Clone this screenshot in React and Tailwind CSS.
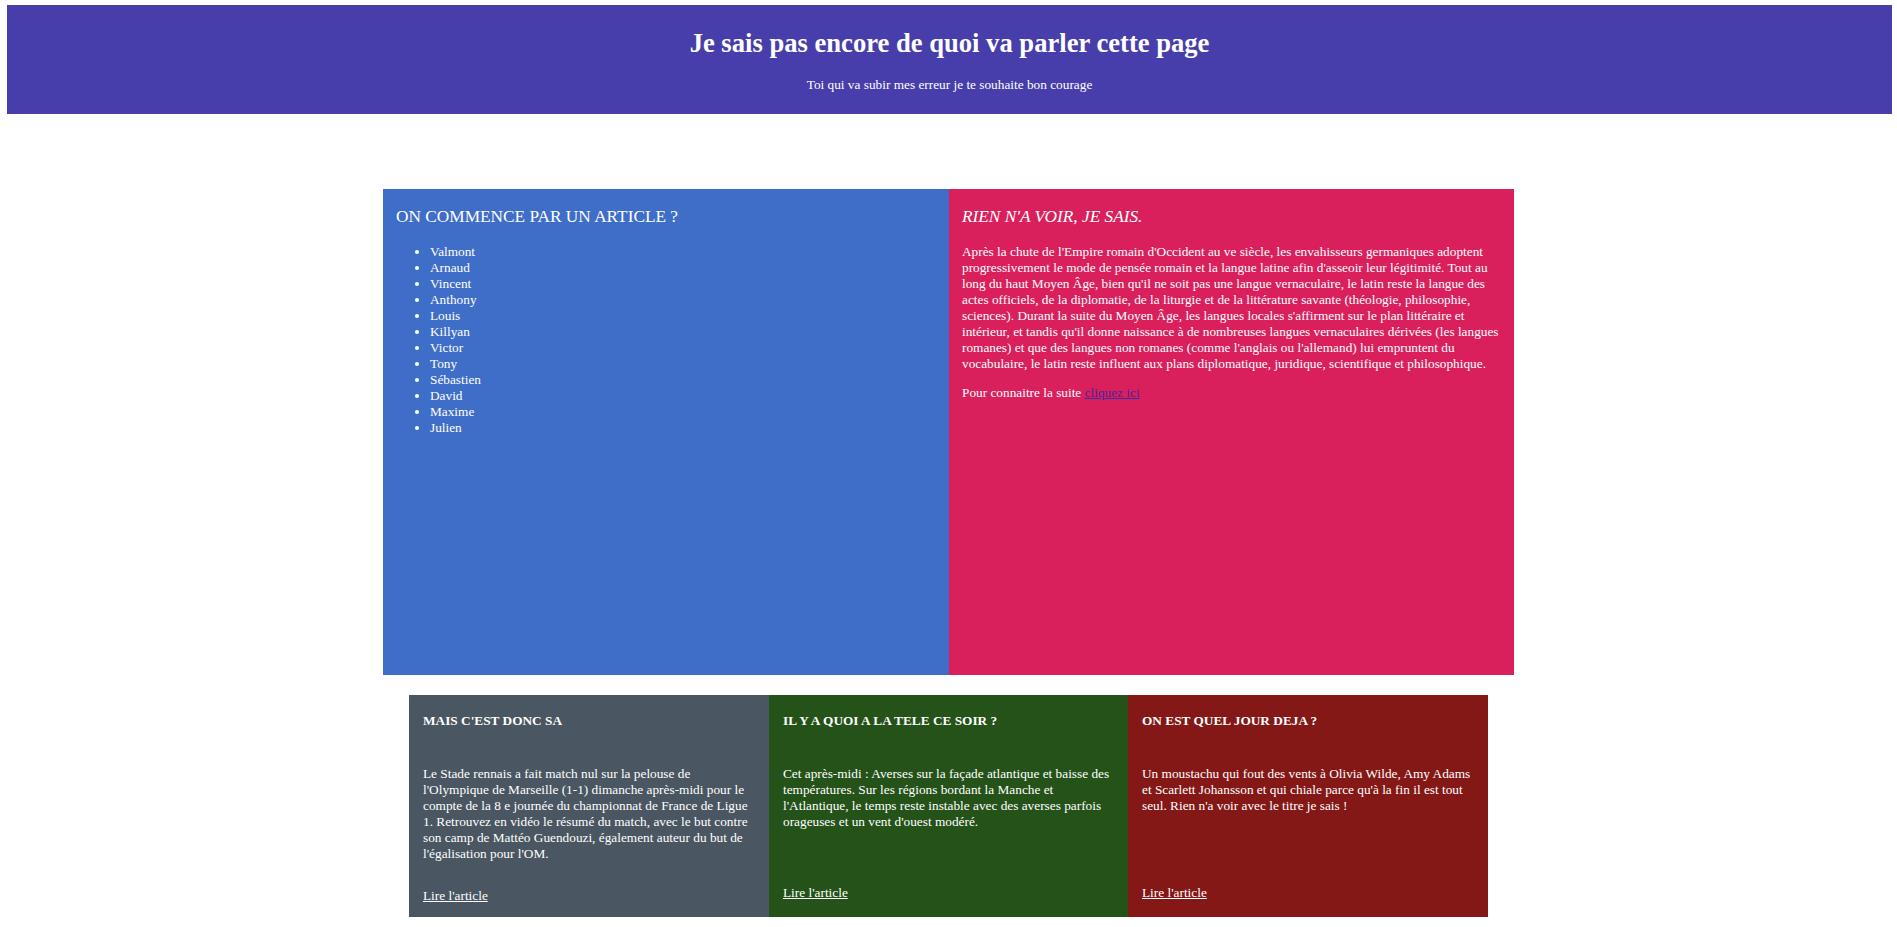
import React from "react";

const names = [
  "Valmont",
  "Arnaud",
  "Vincent",
  "Anthony",
  "Louis",
  "Killyan",
  "Victor",
  "Tony",
  "Sébastien",
  "David",
  "Maxime",
  "Julien",
];

const cards = [
  {
    title: "MAIS C'EST DONC SA",
    text: "Le Stade rennais a fait match nul sur la pelouse de l'Olympique de Marseille (1-1) dimanche après-midi pour le compte de la 8 e journée du championnat de France de Ligue 1. Retrouvez en vidéo le résumé du match, avec le but contre son camp de Mattéo Guendouzi, également auteur du but de l'égalisation pour l'OM.",
    bg: "bg-[#4a5661]",
    pb: "pb-[13px]",
  },
  {
    title: "IL Y A QUOI A LA TELE CE SOIR ?",
    text: "Cet après-midi : Averses sur la façade atlantique et baisse des températures. Sur les régions bordant la Manche et l'Atlantique, le temps reste instable avec des averses parfois orageuses et un vent d'ouest modéré.",
    bg: "bg-[#245219]",
    pb: "pb-[16px]",
  },
  {
    title: "ON EST QUEL JOUR DEJA ?",
    text: "Un moustachu qui fout des vents à Olivia Wilde, Amy Adams et Scarlett Johansson et qui chiale parce qu'à la fin il est tout seul. Rien n'a voir avec le titre je sais !",
    bg: "bg-[#841816]",
    pb: "pb-[16px]",
  },
];

export default function App() {
  return (
    <div className="min-h-screen bg-white text-white font-['Liberation_Serif',serif] pb-4">
      <header className="ml-[7px] mr-[5px] mt-[5px] bg-[#473eab] flex flex-col items-center pt-[24px] pb-[21px]">
        <h1 className="text-[26.6px] leading-[29px] font-bold">
          Je sais pas encore de quoi va parler cette page
        </h1>
        <p className="mt-[19px] text-[13.3px] leading-[16px]">
          Toi qui va subir mes erreur je te souhaite bon courage
        </p>
      </header>

      <div className="flex justify-center mt-[75px]">
        <div className="grid grid-cols-[566px_565px] h-[486px]">
          <section className="bg-[#3f6ec8] pt-[18px] px-[13px]">
            <h2 className="text-[17.3px] leading-[20px]">ON COMMENCE PAR UN ARTICLE ?</h2>
            <ul className="mt-[17px] pl-[34px] list-disc text-[13.3px] leading-[16px]">
              {names.map((n) => (
                <li key={n}>{n}</li>
              ))}
            </ul>
          </section>
          <section className="bg-[#d91f5c] pt-[18px] pl-[13px] pr-[13px]">
            <h2 className="text-[17.3px] leading-[20px] italic">RIEN N'A VOIR, JE SAIS.</h2>
            <p className="mt-[17px] text-[13.3px] leading-[16px]">
              Après la chute de l'Empire romain d'Occident au ve siècle, les envahisseurs germaniques
              adoptent progressivement le mode de pensée romain et la langue latine afin d'asseoir leur
              légitimité. Tout au long du haut Moyen Âge, bien qu'il ne soit pas une langue vernaculaire,
              le latin reste la langue des actes officiels, de la diplomatie, de la liturgie et de la
              littérature savante (théologie, philosophie, sciences). Durant la suite du Moyen Âge, les
              langues locales s'affirment sur le plan littéraire et intérieur, et tandis qu'il donne
              naissance à de nombreuses langues vernaculaires dérivées (les langues romanes) et que des
              langues non romanes (comme l'anglais ou l'allemand) lui empruntent du vocabulaire, le latin
              reste influent aux plans diplomatique, juridique, scientifique et philosophique.
            </p>
            <p className="mt-[13px] text-[13.3px] leading-[16px]">
              Pour connaitre la suite{" "}
              <a href="#" className="underline text-[#44299b]">
                cliquez ici
              </a>
            </p>
          </section>
        </div>
      </div>

      <div className="flex justify-center mt-[20px]">
        <div className="grid grid-cols-[360px_359px_360px]">
          {cards.map((c) => (
            <article key={c.title} className={`${c.bg} ${c.pb} flex flex-col pt-[18px] px-[14px]`}>
              <h4 className="text-[13.3px] leading-[16px] font-bold">{c.title}</h4>
              <p className="mt-[37px] text-[13.3px] leading-[16px]">{c.text}</p>
              <div className="mt-auto pt-[26px] text-[13.3px] leading-[16px]">
                <a href="#" className="underline text-white">
                  Lire l'article
                </a>
              </div>
            </article>
          ))}
        </div>
      </div>
    </div>
  );
}
